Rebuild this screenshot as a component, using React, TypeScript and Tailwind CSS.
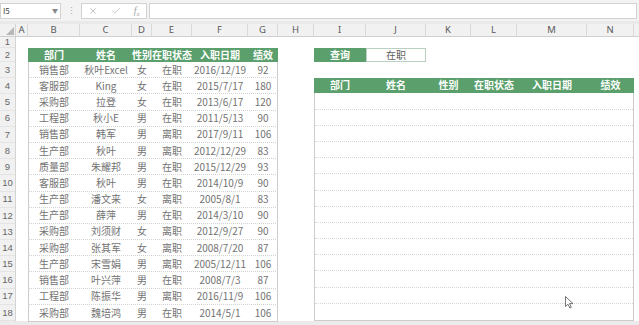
import { X, Check } from "lucide-react";

const font = { fontFamily: '"Noto Sans CJK SC", "Noto Sans", sans-serif' };

const colHeads = [
  { k: "A", w: "w-[12px]" },
  { k: "B", w: "w-[52px]" },
  { k: "C", w: "w-[52px]" },
  { k: "D", w: "w-[20px]" },
  { k: "E", w: "w-[40px]" },
  { k: "F", w: "w-[56px]" },
  { k: "G", w: "w-[30px]" },
  { k: "H", w: "w-[36px]" },
  { k: "I", w: "w-[52px]" },
  { k: "J", w: "w-[60px]" },
  { k: "K", w: "w-[45px]" },
  { k: "L", w: "w-[46px]" },
  { k: "M", w: "w-[70px]" },
  { k: "N", w: "w-[47px]" },
];

const rows = [
  ["销售部", "秋叶Excel", "女", "在职", "2016/12/19", "92"],
  ["客服部", "King", "女", "在职", "2015/7/17", "180"],
  ["采购部", "拉登", "女", "在职", "2013/6/17", "120"],
  ["工程部", "秋小E", "男", "在职", "2011/5/13", "90"],
  ["销售部", "韩军", "男", "离职", "2017/9/11", "106"],
  ["生产部", "秋叶", "男", "离职", "2012/12/29", "83"],
  ["质量部", "朱耀邦", "男", "在职", "2015/12/29", "93"],
  ["客服部", "秋叶", "男", "在职", "2014/10/9", "90"],
  ["生产部", "潘文来", "女", "离职", "2005/8/1", "83"],
  ["生产部", "薛萍", "男", "在职", "2014/3/10", "90"],
  ["采购部", "刘须财", "女", "离职", "2012/9/27", "90"],
  ["采购部", "张其军", "女", "离职", "2008/7/20", "87"],
  ["生产部", "宋雪娟", "男", "离职", "2005/12/11", "106"],
  ["销售部", "叶兴萍", "男", "在职", "2008/7/3", "87"],
  ["工程部", "陈振华", "男", "离职", "2016/11/9", "106"],
  ["采购部", "魏培鸿", "男", "在职", "2014/5/1", "106"],
];

const heads = ["部门", "姓名", "性别", "在职状态", "入职日期", "绩效"];

function RowNumbers() {
  const nums = Array.from({ length: 18 }, (_, i) => i + 1);
  return (
    <div
      className="w-[16px] shrink-0 bg-[#f1f1f1] border-r border-[#d4d4d4] flex flex-col"
      style={{ fontFamily: '"Liberation Sans", sans-serif' }}
    >
      {nums.map((n) => (
        <div
          key={n}
          className={`${n === 1 ? "h-[11px]" : n === 2 ? "h-[14px]" : "h-[16.2px]"} flex items-center justify-center text-[9.5px] leading-none text-[#666] border-b border-[#e4e4e4]`}
        >
          {n}
        </div>
      ))}
    </div>
  );
}

function LeftTable() {
  const grid = "grid grid-cols-[52px_52px_20px_40px_56px_30px]";
  return (
    <div className="w-[250px] shrink-0 mt-[11px]">
      <div className={`${grid} h-[14px] bg-[#5a9f6c] text-white font-bold text-[10px] leading-none`}>
        {heads.map((h) => (
          <div key={h} className="flex items-center justify-center whitespace-nowrap">
            {h}
          </div>
        ))}
      </div>
      <div className="border border-t-0 border-[#cdcdcd]">
        {rows.map((r, i) => (
          <div
            key={i}
            className={`${grid} h-[16.2px] -mx-px text-[10px] leading-none text-[#737373] ${i < rows.length - 1 ? "border-b border-dotted border-[#d2d2d2]" : ""}`}
          >
            {r.map((c, j) => (
              <div key={j} className="flex items-center justify-center whitespace-nowrap">
                {c}
              </div>
            ))}
          </div>
        ))}
      </div>
    </div>
  );
}

function RightSide() {
  const grid = "grid grid-cols-[52px_60px_45px_46px_70px_47px]";
  return (
    <div className="w-[320px] shrink-0 mt-[11px] flex flex-col">
      <div className="flex h-[14px] text-[10px] leading-none">
        <div className="w-[52px] bg-[#5a9f6c] text-white font-bold flex items-center justify-center">查询</div>
        <div className="w-[60px] border border-[#b9cfbf] text-[#5c5c5c] flex items-center justify-center">在职</div>
      </div>
      <div className="h-[16.2px]" />
      <div className={`${grid} h-[16.2px] bg-[#5a9f6c] text-white font-bold text-[10px] leading-none`}>
        {heads.map((h) => (
          <div key={h} className="flex items-center justify-center whitespace-nowrap">
            {h}
          </div>
        ))}
      </div>
      <div className="border border-t-0 border-[#cdcdcd]">
        {Array.from({ length: 14 }, (_, i) => (
          <div
            key={i}
            className={`h-[16.2px] ${i < 13 ? "border-b border-dotted border-[#d8d8d8]" : ""}`}
          />
        ))}
      </div>
    </div>
  );
}

export default function App() {
  return (
    <div className="w-[639px] h-[325px] bg-white overflow-hidden relative" style={font}>
      {/* formula bar */}
      <div className="h-[21px] bg-[#f3f3f3] flex items-center gap-[2px] pr-[2px]">
        <div className="w-[61px] h-[16px] bg-white border border-[#d2d2d2] flex items-center justify-between px-[2px] text-[8px] text-[#444]">
          <span>I5</span>
          <span className="text-[6px] text-[#888]">▼</span>
        </div>
        <div className="w-[16px] flex justify-center text-[9px] text-[#aaa]">⋮</div>
        <div className="w-[66px] h-[16px] bg-white border border-[#d2d2d2] flex items-center justify-around text-[#a5a5a5]">
          <X size={10} strokeWidth={1.5} />
          <Check size={10} strokeWidth={1.5} />
          <span className="text-[10px] italic" style={{ fontFamily: '"Liberation Serif", serif' }}>
            f<sub className="text-[7px]">x</sub>
          </span>
        </div>
        <div className="flex-1 h-[16px] bg-white border border-[#d2d2d2]" />
      </div>
      <div className="h-[3px] bg-[#e9e9e9]" />

      {/* column headers */}
      <div className="h-[13px] flex bg-[#f1f1f1] border-b border-[#cfcfcf] text-[9.5px] leading-none text-[#5a5a5a]" style={{ fontFamily: '"Noto Sans", sans-serif' }}>
        <div className="w-[16px] border-r border-[#d4d4d4] relative">
          <svg className="absolute right-[1px] bottom-[1px]" width="8" height="8" viewBox="0 0 8 8">
            <polygon points="8,0 8,8 0,8" fill="#b8b8b8" />
          </svg>
        </div>
        {colHeads.map((c) => (
          <div key={c.k} className={`${c.w} shrink-0 border-r border-[#d9d9d9] flex items-center justify-center`}>
            {c.k}
          </div>
        ))}
        <div className="flex-1" />
      </div>

      {/* sheet body */}
      <div className="flex h-[284px]">
        <RowNumbers />
        <div className="w-[12px] shrink-0" />
        <LeftTable />
        <div className="w-[36px] shrink-0" />
        <RightSide />
      </div>
      <div className="h-[4px] bg-[#ebebeb]" />

      {/* mouse pointer */}
      <svg className="absolute left-[565px] top-[296px]" width="9" height="13" viewBox="0 0 9 13">
        <path d="M0.5 0.5 L0.5 10.5 L3 8.2 L4.8 12 L6.3 11.3 L4.6 7.6 L8 7.6 Z" fill="#fff" stroke="#555" strokeWidth="0.8" />
      </svg>
    </div>
  );
}
